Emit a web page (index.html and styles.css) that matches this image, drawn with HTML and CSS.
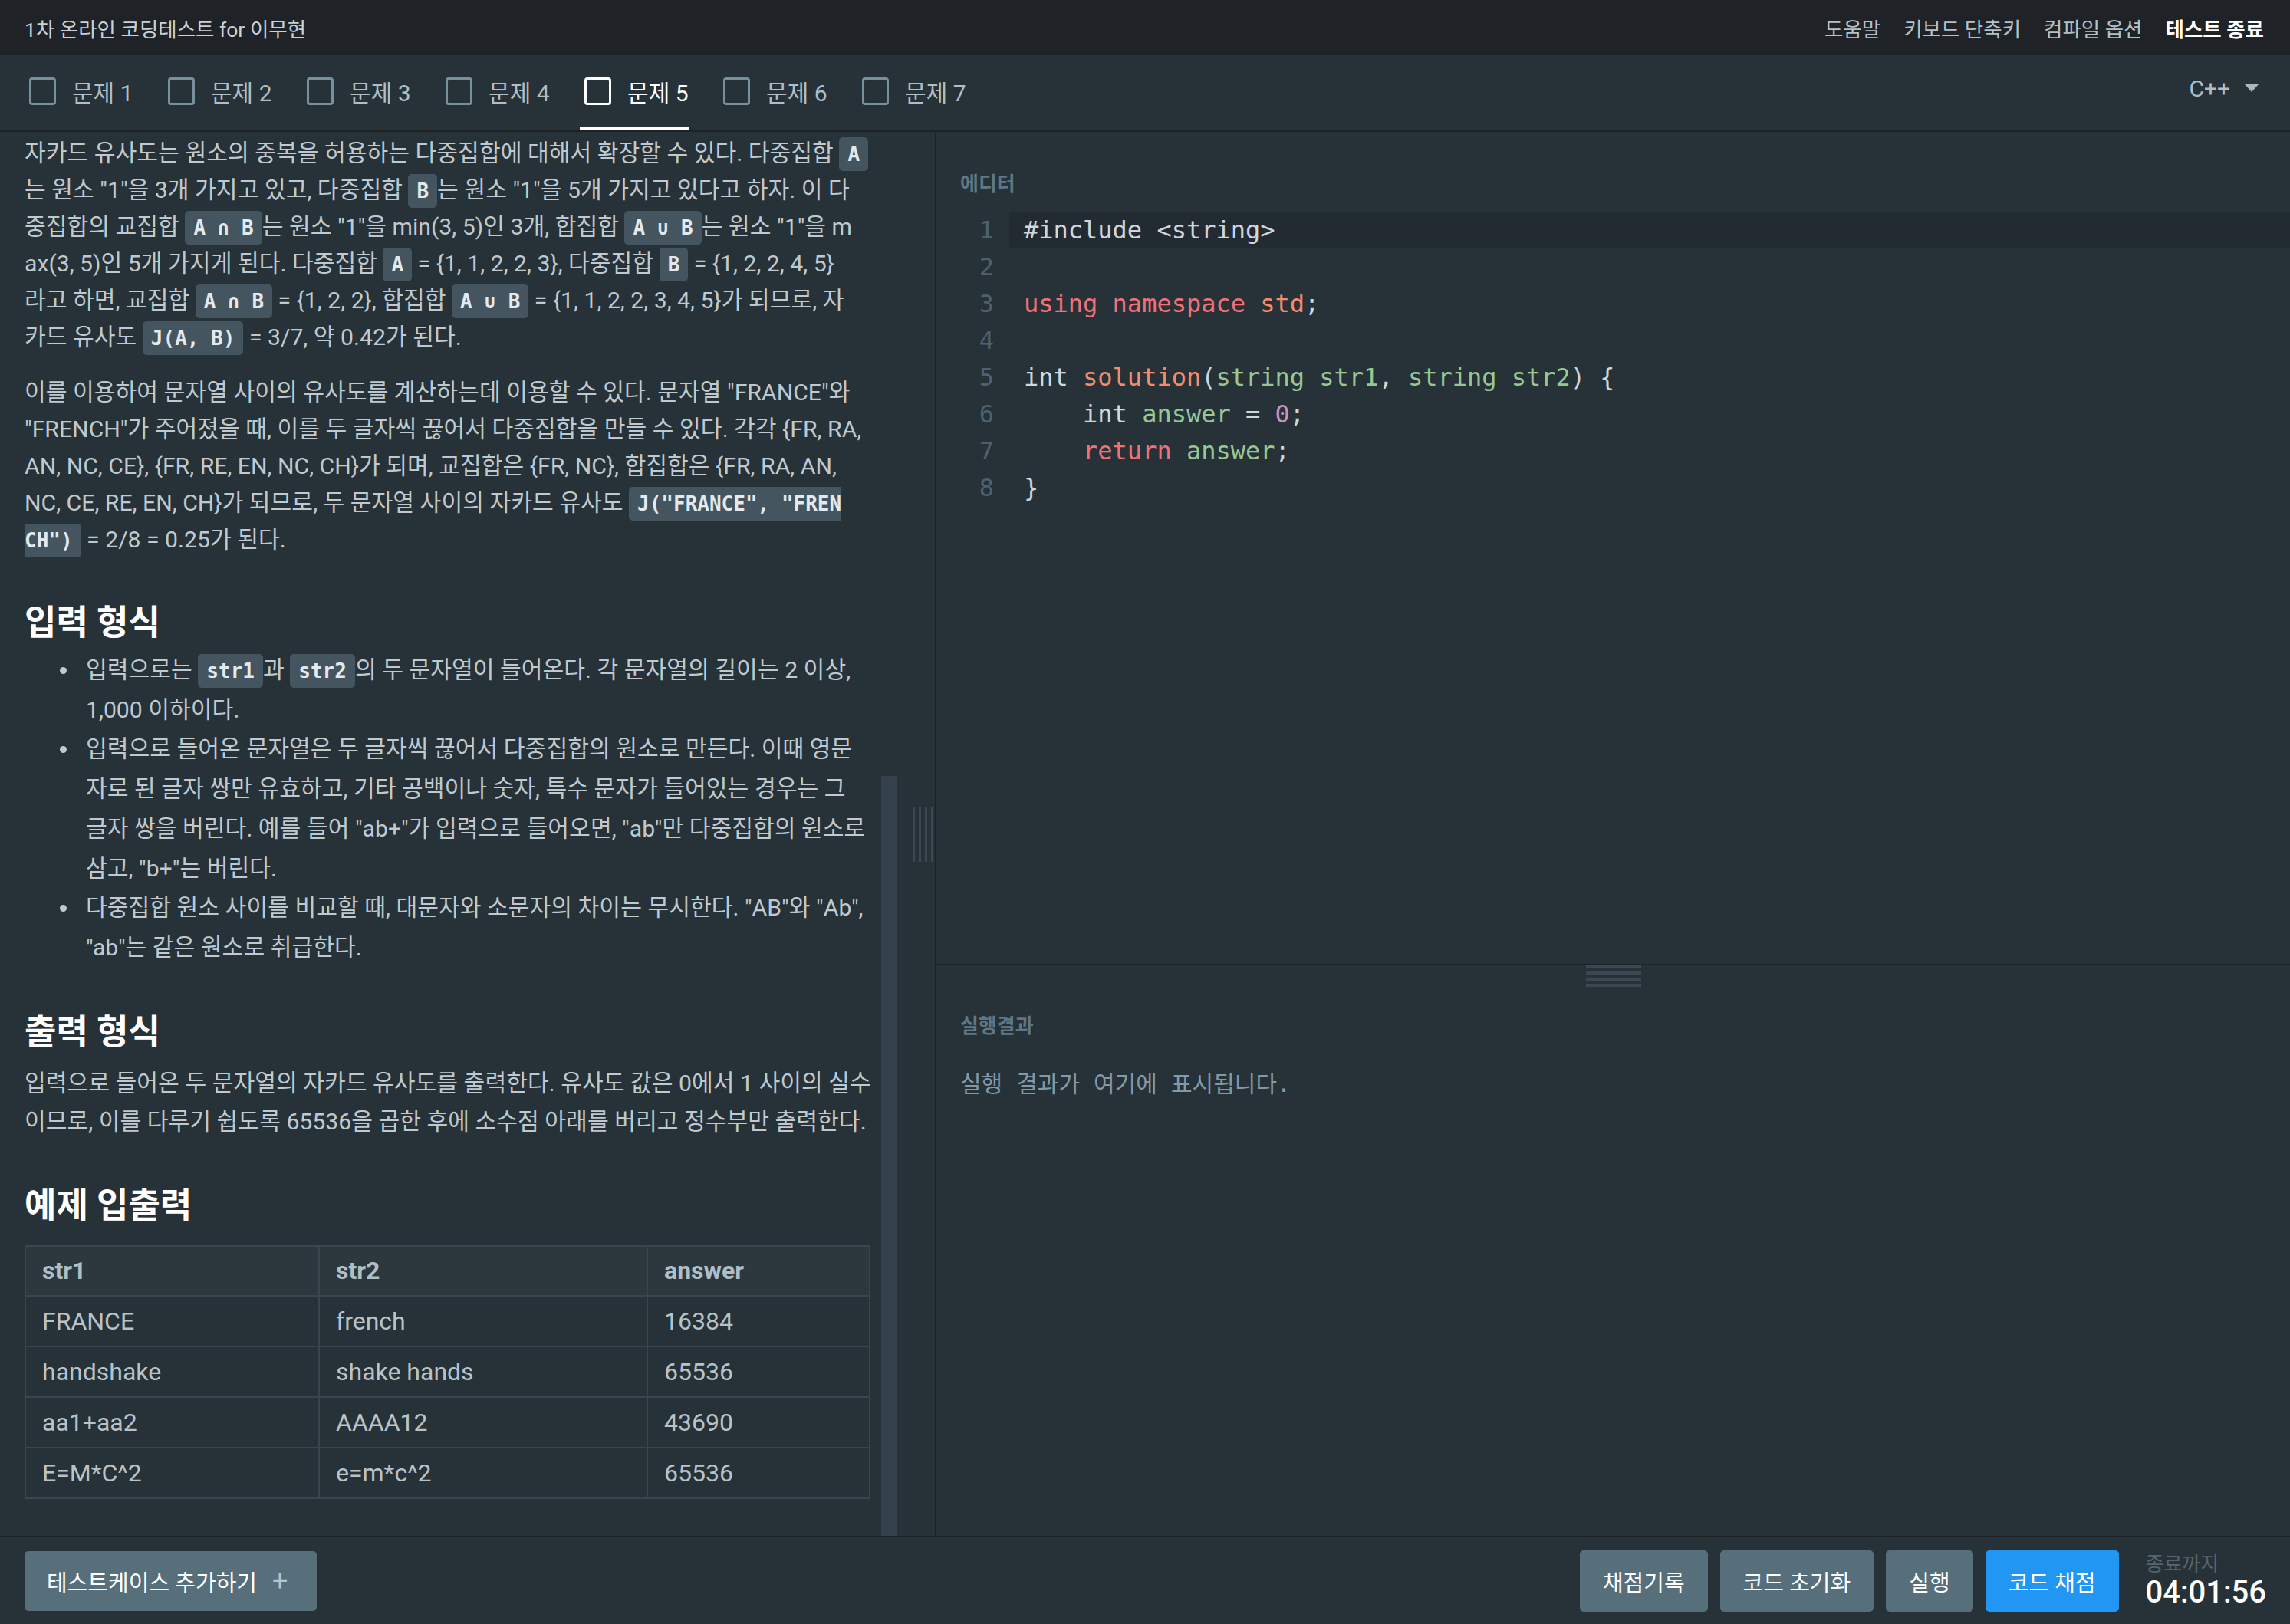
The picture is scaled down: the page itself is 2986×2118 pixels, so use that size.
FILE: index.html
```html
<!DOCTYPE html>
<html lang="ko">
<head>
<meta charset="utf-8">
<title>1차 온라인 코딩테스트 for 이무현</title>
<link rel="stylesheet" href="styles.css">
</head>
<body>
<div class="app">
  <header class="topbar">
    <div class="title">1차 온라인 코딩테스트 for 이무현</div>
    <nav class="menu">
      <span>도움말</span>
      <span>키보드 단축키</span>
      <span>컴파일 옵션</span>
      <span class="end">테스트 종료</span>
    </nav>
  </header>

  <div class="tabbar">
    <ul class="tabs">
      <li class="tab"><span class="check"></span><span>문제 1</span></li>
      <li class="tab"><span class="check"></span><span>문제 2</span></li>
      <li class="tab"><span class="check"></span><span>문제 3</span></li>
      <li class="tab"><span class="check"></span><span>문제 4</span></li>
      <li class="tab active"><span class="check"></span><span>문제 5</span></li>
      <li class="tab"><span class="check"></span><span>문제 6</span></li>
      <li class="tab"><span class="check"></span><span>문제 7</span></li>
    </ul>
    <div class="lang"><span>C++</span><span class="caret"></span></div>
  </div>

  <main class="main">
    <section class="left">
      <div class="desc">
        <p>자카드 유사도는 원소의 중복을 허용하는 다중집합에 대해서 확장할 수 있다. 다중집합 <code>A</code><br>는 원소 "1"을 3개 가지고 있고, 다중집합 <code>B</code>는 원소 "1"을 5개 가지고 있다고 하자. 이 다<br>중집합의 교집합 <code>A ∩ B</code>는 원소 "1"을 min(3, 5)인 3개, 합집합 <code>A ∪ B</code>는 원소 "1"을 m<br>ax(3, 5)인 5개 가지게 된다. 다중집합 <code>A</code> = {1, 1, 2, 2, 3}, 다중집합 <code>B</code> = {1, 2, 2, 4, 5}<br>라고 하면, 교집합 <code>A ∩ B</code> = {1, 2, 2}, 합집합 <code>A ∪ B</code> = {1, 1, 2, 2, 3, 4, 5}가 되므로, 자<br>카드 유사도 <code>J(A, B)</code> = 3/7, 약 0.42가 된다.</p>
        <p>이를 이용하여 문자열 사이의 유사도를 계산하는데 이용할 수 있다. 문자열 "FRANCE"와<br>"FRENCH"가 주어졌을 때, 이를 두 글자씩 끊어서 다중집합을 만들 수 있다. 각각 {FR, RA,<br>AN, NC, CE}, {FR, RE, EN, NC, CH}가 되며, 교집합은 {FR, NC}, 합집합은 {FR, RA, AN,<br>NC, CE, RE, EN, CH}가 되므로, 두 문자열 사이의 자카드 유사도 <code>J("FRANCE", "FREN<br>CH")</code> = 2/8 = 0.25가 된다.</p>

        <h3>입력 형식</h3>
        <ul>
          <li>입력으로는 <code>str1</code>과 <code>str2</code>의 두 문자열이 들어온다. 각 문자열의 길이는 2 이상,<br>1,000 이하이다.</li>
          <li>입력으로 들어온 문자열은 두 글자씩 끊어서 다중집합의 원소로 만든다. 이때 영문<br>자로 된 글자 쌍만 유효하고, 기타 공백이나 숫자, 특수 문자가 들어있는 경우는 그<br>글자 쌍을 버린다. 예를 들어 "ab+"가 입력으로 들어오면, "ab"만 다중집합의 원소로<br>삼고, "b+"는 버린다.</li>
          <li>다중집합 원소 사이를 비교할 때, 대문자와 소문자의 차이는 무시한다. "AB"와 "Ab",<br>"ab"는 같은 원소로 취급한다.</li>
        </ul>

        <h3>출력 형식</h3>
        <p class="out-desc">입력으로 들어온 두 문자열의 자카드 유사도를 출력한다. 유사도 값은 0에서 1 사이의 실수<br>이므로, 이를 다루기 쉽도록 65536을 곱한 후에 소수점 아래를 버리고 정수부만 출력한다.</p>

        <h3>예제 입출력</h3>
        <table class="samples">
          <colgroup><col class="c1"><col class="c2"><col></colgroup>
          <thead>
            <tr><th>str1</th><th>str2</th><th>answer</th></tr>
          </thead>
          <tbody>
            <tr><td>FRANCE</td><td>french</td><td>16384</td></tr>
            <tr><td>handshake</td><td>shake hands</td><td>65536</td></tr>
            <tr><td>aa1+aa2</td><td>AAAA12</td><td>43690</td></tr>
            <tr><td>E=M*C^2</td><td>e=m*c^2</td><td>65536</td></tr>
          </tbody>
        </table>
      </div>
      <div class="track"><div class="thumb"></div></div>
      <div class="resizer"><div class="vgrip"></div></div>
    </section>

    <section class="right">
      <div class="editor">
        <div class="label">에디터</div>
        <div class="code">
          <div class="line cur"><span class="ln">1</span><span class="src">#include &lt;string&gt;</span></div>
          <div class="line"><span class="ln">2</span><span class="src"></span></div>
          <div class="line"><span class="ln">3</span><span class="src"><span class="kw">using</span> <span class="kw">namespace</span> <span class="ns">std</span>;</span></div>
          <div class="line"><span class="ln">4</span><span class="src"></span></div>
          <div class="line"><span class="ln">5</span><span class="src">int <span class="fn">solution</span>(<span class="vr">string str1</span>, <span class="vr">string str2</span>) {</span></div>
          <div class="line"><span class="ln">6</span><span class="src">    int <span class="vr">answer</span> = <span class="num">0</span>;</span></div>
          <div class="line"><span class="ln">7</span><span class="src">    <span class="kw">return</span> <span class="vr">answer</span>;</span></div>
          <div class="line"><span class="ln">8</span><span class="src">}</span></div>
        </div>
      </div>
      <div class="result">
        <div class="hgrip"></div>
        <div class="label">실행결과</div>
        <div class="out">실행 결과가 여기에 표시됩니다.</div>
      </div>
    </section>
  </main>

  <footer class="bottombar">
    <button class="btn add">테스트케이스 추가하기<span class="plus">+</span></button>
    <div class="actions">
      <button class="btn">채점기록</button>
      <button class="btn">코드 초기화</button>
      <button class="btn">실행</button>
      <button class="btn primary">코드 채점</button>
    </div>
    <div class="timer">
      <span class="lbl">종료까지</span>
      <span class="time">04:01:56</span>
    </div>
  </footer>
</div>
</body>
</html>
```

FILE: styles.css
```css
* { box-sizing: border-box; }

html, body {
  margin: 0;
  padding: 0;
}

body {
  width: 2986px;
  height: 2118px;
  overflow: hidden;
  background: #263238;
  color: #bfc9cf;
  font-family: Roboto, "Noto Sans CJK KR", sans-serif;
}

.app {
  display: flex;
  flex-direction: column;
  height: 2118px;
}

/* top bar */
.topbar {
  flex: none;
  height: 72px;
  background: #1f2327;
  display: flex;
  align-items: center;
  justify-content: space-between;
  padding: 0 34px 0 32px;
}

.title {
  font-size: 26.5px;
  color: #c9d1d6;
}

.menu {
  display: flex;
  gap: 30px;
  font-size: 26.5px;
  color: #b5c1c8;
}

.menu .end {
  color: #ffffff;
  font-weight: 700;
}

/* tab bar */
.tabbar {
  flex: none;
  height: 100px;
  display: flex;
  justify-content: space-between;
  border-bottom: 2px solid #1c2226;
  padding: 0 41px 0 32px;
}

.tabs {
  list-style: none;
  margin: 0;
  padding: 0;
  display: flex;
  gap: 39.5px;
}

.tab {
  display: flex;
  align-items: center;
  gap: 21px;
  padding: 0 0 0 6px;
  border-bottom: 5px solid transparent;
  font-size: 30px;
  color: #b0bec5;
}

.check {
  width: 35px;
  height: 36px;
  border: 3px solid #78909c;
  border-radius: 4px;
}

.tab.active {
  color: #ffffff;
  border-bottom-color: #ffffff;
}

.tab.active .check {
  border-color: #ffffff;
}

.lang {
  display: flex;
  align-items: center;
  gap: 19px;
  padding-bottom: 12px;
  font-size: 30px;
  color: #b0bec5;
}

.caret {
  width: 0;
  height: 0;
  border-left: 9px solid transparent;
  border-right: 9px solid transparent;
  border-top: 10px solid #a9b7bf;
}

/* main */
.main {
  flex: 1;
  min-height: 0;
  display: flex;
}

.left {
  flex: none;
  width: 1221px;
  display: flex;
  border-right: 2px solid #1c2226;
}

.desc {
  flex: none;
  width: 1139px;
  padding: 4px 0 0 32px;
  font-size: 30.2px;
}

.desc p {
  margin: 0;
  line-height: 48px;
  white-space: nowrap;
}

.desc p + p {
  margin-top: 24px;
}

.desc h3 {
  margin: 57px 0 0;
  font-size: 45px;
  line-height: 56px;
  font-weight: 700;
  color: #ffffff;
}

.desc h3 + p {
  margin-top: 13px;
}

.desc .out-desc {
  line-height: 50px;
}

.desc ul {
  margin: 7px 0 0;
  padding: 0 0 0 80px;
  list-style: none;
}

.desc li {
  position: relative;
  line-height: 51.7px;
  white-space: nowrap;
}

.desc li::before {
  content: "";
  position: absolute;
  left: -34px;
  top: 22px;
  width: 9px;
  height: 9px;
  border-radius: 50%;
  background: #bfc9cf;
}

code {
  font-family: "DejaVu Sans Mono", monospace;
  font-size: 26px;
  line-height: 1;
  font-weight: 700;
  color: #e3e9ec;
  background: #445560;
  padding: 7px 11px;
  border-radius: 5px;
}

.samples {
  margin-top: 23px;
  width: 1103px;
  border-collapse: collapse;
  font-size: 32px;
}

.samples .c1 { width: 383px; }
.samples .c2 { width: 428px; }

.samples th,
.samples td {
  border: 2px solid #37474f;
  padding: 0 21px;
  text-align: left;
}

.samples th {
  height: 65px;
  background: #2c373e;
  color: #b0bec5;
  font-weight: 700;
}

.samples td {
  height: 66px;
  color: #b8c3c9;
  font-weight: 400;
}

.track {
  flex: none;
  width: 21px;
  margin-left: 10px;
  display: flex;
  flex-direction: column;
  justify-content: flex-end;
}

.thumb {
  height: 991px;
  background: #36424b;
}

.resizer {
  flex: 1;
  display: flex;
  align-items: center;
  justify-content: flex-end;
  padding-right: 1px;
}

.vgrip {
  width: 28px;
  height: 72px;
  background: repeating-linear-gradient(to right, #3b4851 0 3px, transparent 3px 8px);
}

/* right pane */
.right {
  flex: 1;
  display: flex;
  flex-direction: column;
}

.editor {
  flex: none;
  height: 1087px;
  padding-top: 51px;
  border-bottom: 2px solid #1c2226;
}

.label {
  padding-left: 31px;
  font-size: 26px;
  line-height: 34px;
  font-weight: 700;
  color: #5f7785;
}

.code {
  margin-top: 19px;
  font-family: "DejaVu Sans Mono", monospace;
  font-size: 32px;
  line-height: 48px;
}

.line {
  display: flex;
  height: 48px;
}

.ln {
  flex: none;
  width: 95px;
  padding-right: 20px;
  text-align: right;
  color: #4e6170;
}

.src {
  flex: 1;
  padding-left: 19px;
  white-space: pre;
  color: #d0d6db;
}

.line.cur .src {
  background: #222b31;
}

.kw { color: #f07178; }
.ns { color: #f78c6c; }
.fn { color: #f78c6c; }
.vr { color: #99c794; }
.num { color: #c594c5; }

.result {
  flex: 1;
  display: flex;
  flex-direction: column;
}

.hgrip {
  flex: none;
  align-self: center;
  width: 72px;
  height: 28px;
  background: repeating-linear-gradient(to bottom, #3b4851 0 4px, transparent 4px 8px);
}

.result .label {
  margin-top: 34px;
}

.out {
  margin-top: 39px;
  padding-left: 31px;
  font-family: "DejaVu Sans Mono", "Noto Sans CJK KR", monospace;
  font-size: 30px;
  line-height: 40px;
  color: #8299a6;
}

/* bottom bar */
.bottombar {
  flex: none;
  height: 115px;
  border-top: 2px solid #1c2226;
  display: flex;
  align-items: center;
  padding: 0 31px 0 32px;
}

.btn {
  height: 80px;
  display: flex;
  align-items: center;
  padding: 0 30px;
  border: none;
  border-radius: 5px;
  background: #566f7a;
  color: #ffffff;
  font-family: Roboto, "Noto Sans CJK KR", sans-serif;
  font-size: 29px;
}

.btn.primary {
  background: #2196f3;
}

.btn.add {
  height: 78px;
  gap: 20px;
  padding: 0 38px 0 29px;
}

.plus {
  font-size: 36px;
  color: #b7c4cb;
}

.actions {
  margin-left: auto;
  display: flex;
  gap: 16px;
}

.timer {
  margin-left: 35px;
  display: flex;
  flex-direction: column;
}

.timer .lbl {
  font-size: 26px;
  line-height: 30px;
  color: #56656e;
}

.timer .time {
  font-size: 40px;
  line-height: 44px;
  font-weight: 500;
  color: #ffffff;
}
```
